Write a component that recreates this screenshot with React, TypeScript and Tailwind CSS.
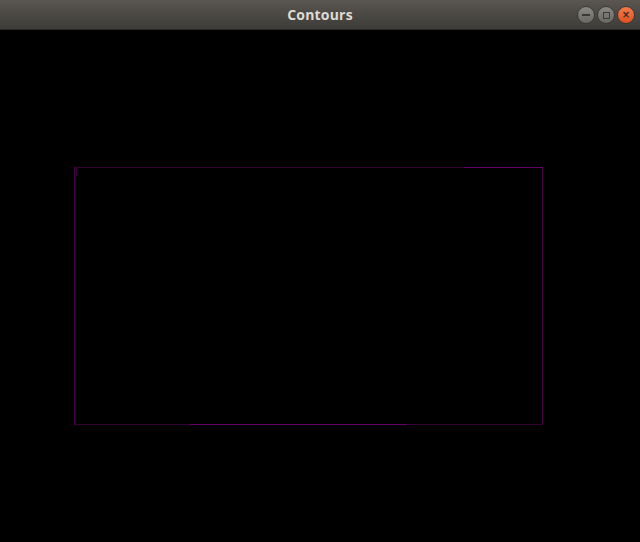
import React from 'react';

function TitleBar() {
  return (
    <div className="relative h-[30px] flex items-center justify-center bg-gradient-to-b from-[#5a5650] to-[#3d3c38] border-b border-[#2a2927]">
      <span className="text-[14px] font-bold text-[#dfdbd2] tracking-[0.2px]" style={{ fontFamily: '"Open Sans", "DejaVu Sans", sans-serif' }}>
        Contours
      </span>
      <div className="absolute right-[5px] top-[6px] flex items-center gap-[2px]">
        <div className="w-[18px] h-[18px] rounded-full bg-gradient-to-b from-[#8a8882] to-[#6a6862] border border-[#3a3935] flex items-center justify-center">
          <div className="w-[8px] h-[1.5px] bg-[#3a3935]" />
        </div>
        <div className="w-[18px] h-[18px] rounded-full bg-gradient-to-b from-[#8a8882] to-[#6a6862] border border-[#3a3935] flex items-center justify-center">
          <div className="w-[7px] h-[7px] border border-[#3a3935]" />
        </div>
        <div className="w-[18px] h-[18px] rounded-full bg-gradient-to-b from-[#f37a4a] to-[#e0501e] border border-[#3a3935] flex items-center justify-center text-[10px] leading-none text-[#3a2a20] font-bold" style={{ fontFamily: '"DejaVu Sans", sans-serif' }}>
          ×
        </div>
      </div>
    </div>
  );
}

export default function App() {
  const dark = '#320032';
  const mid = '#480048';
  const bright = '#660066';
  return (
    <div className="w-[640px] h-[542px] flex flex-col bg-black overflow-hidden">
      <TitleBar />
      <div className="flex-1 bg-black">
        <svg width="640" height="512" viewBox="0 0 640 512" shapeRendering="crispEdges">
          <line x1="74" y1="137.5" x2="464" y2="137.5" stroke={dark} strokeWidth="1" />
          <line x1="464" y1="137.5" x2="543" y2="137.5" stroke={bright} strokeWidth="1" />
          <line x1="542.5" y1="137" x2="542.5" y2="395" stroke={mid} strokeWidth="1" />
          <line x1="74" y1="394.5" x2="190" y2="394.5" stroke={dark} strokeWidth="1" />
          <line x1="190" y1="394.5" x2="407" y2="394.5" stroke={bright} strokeWidth="1" />
          <line x1="407" y1="394.5" x2="543" y2="394.5" stroke={dark} strokeWidth="1" />
          <line x1="74.5" y1="137" x2="74.5" y2="395" stroke={mid} strokeWidth="1" />
          <line x1="76.5" y1="137" x2="76.5" y2="146" stroke={dark} strokeWidth="1" />
        </svg>
      </div>
    </div>
  );
}
